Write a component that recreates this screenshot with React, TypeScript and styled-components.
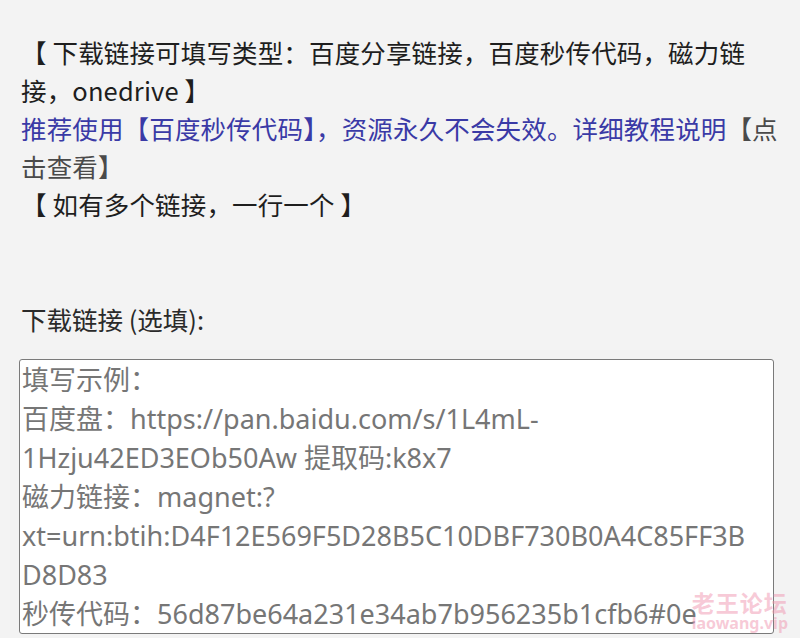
import React from 'react';
import styled, { createGlobalStyle } from 'styled-components';

const GlobalStyle = createGlobalStyle`
  html, body {
    margin: 0;
    padding: 0;
    background: #f3f3f3;
  }
  body {
    font-family: 'Noto Sans CJK SC', 'Noto Sans', sans-serif;
  }
`;

const Page = styled.div`
  position: relative;
  width: 800px;
  height: 638px;
  overflow: hidden;
  box-sizing: border-box;
  padding: 33px 20px 0 21px;
  background: #f3f3f3;
`;

const Notice = styled.div`
  font-size: 25.5px;
  line-height: 38px;
  letter-spacing: 0.15px;
  color: #1e1e1e;
  max-width: 758px;
`;

const Line = styled.div<{ $tone?: 'blue' | 'dark' }>`
  color: ${({ $tone }) => ($tone === 'blue' ? '#3a3aa6' : '#1e1e1e')};
`;

const MutedLink = styled.span`
  color: #4a4a4a;
`;

const FieldLabel = styled.label`
  display: block;
  margin-top: 77px;
  font-size: 25.5px;
  line-height: 38px;
  color: #2a2a2a;
`;

const Input = styled.textarea`
  display: block;
  margin: 21px 0 0 -2px;
  width: 755px;
  height: 275px;
  box-sizing: border-box;
  padding: 0 20px 0 2px;
  border: 1px solid #7a7a7a;
  border-radius: 3px;
  background: #fff;
  font-family: 'Noto Sans', 'Noto Sans CJK SC', sans-serif;
  font-size: 27px;
  line-height: 39px;
  color: #333;
  resize: none;
  overflow: hidden;

  &::placeholder {
    color: #767676;
    opacity: 1;
  }
`;

const Watermark = styled.div`
  position: absolute;
  right: 12px;
  bottom: 6px;
  display: flex;
  flex-direction: column;
  align-items: center;
  color: rgba(240, 150, 175, 0.5);
  pointer-events: none;
`;

const WatermarkTitle = styled.span`
  font-size: 23px;
  line-height: 26px;
  font-weight: 700;
  letter-spacing: 1px;
`;

const WatermarkSite = styled.span`
  font-family: 'Noto Sans', sans-serif;
  font-size: 16px;
  line-height: 17px;
  font-weight: 700;
`;

const example = [
  '填写示例：',
  '百度盘：https://pan.baidu.com/s/1L4mL-1Hzju42ED3EOb50Aw 提取码:k8x7',
  '磁力链接：magnet:?xt=urn:btih:D4F12E569F5D28B5C10DBF730B0A4C85FF3BD8D83',
  '秒传代码：56d87be64a231e34ab7b956235b1cfb6#0e',
].join('\n');

const App = () => {
  return (
    <>
      <GlobalStyle />
      <Page>
        <Notice>
          <Line>【 下载链接可填写类型：百度分享链接，百度秒传代码，磁力链接，onedrive 】</Line>
          <Line $tone='blue'>
            推荐使用【百度秒传代码】，资源永久不会失效。详细教程说明<MutedLink>【点击查看】</MutedLink>
          </Line>
          <Line>【 如有多个链接，一行一个 】</Line>
        </Notice>
        <FieldLabel htmlFor='links'>下载链接 (选填):</FieldLabel>
        <Input id='links' name='links' placeholder={example} />
        <Watermark>
          <WatermarkTitle>老王论坛</WatermarkTitle>
          <WatermarkSite>laowang.vip</WatermarkSite>
        </Watermark>
      </Page>
    </>
  );
};

export default App;
